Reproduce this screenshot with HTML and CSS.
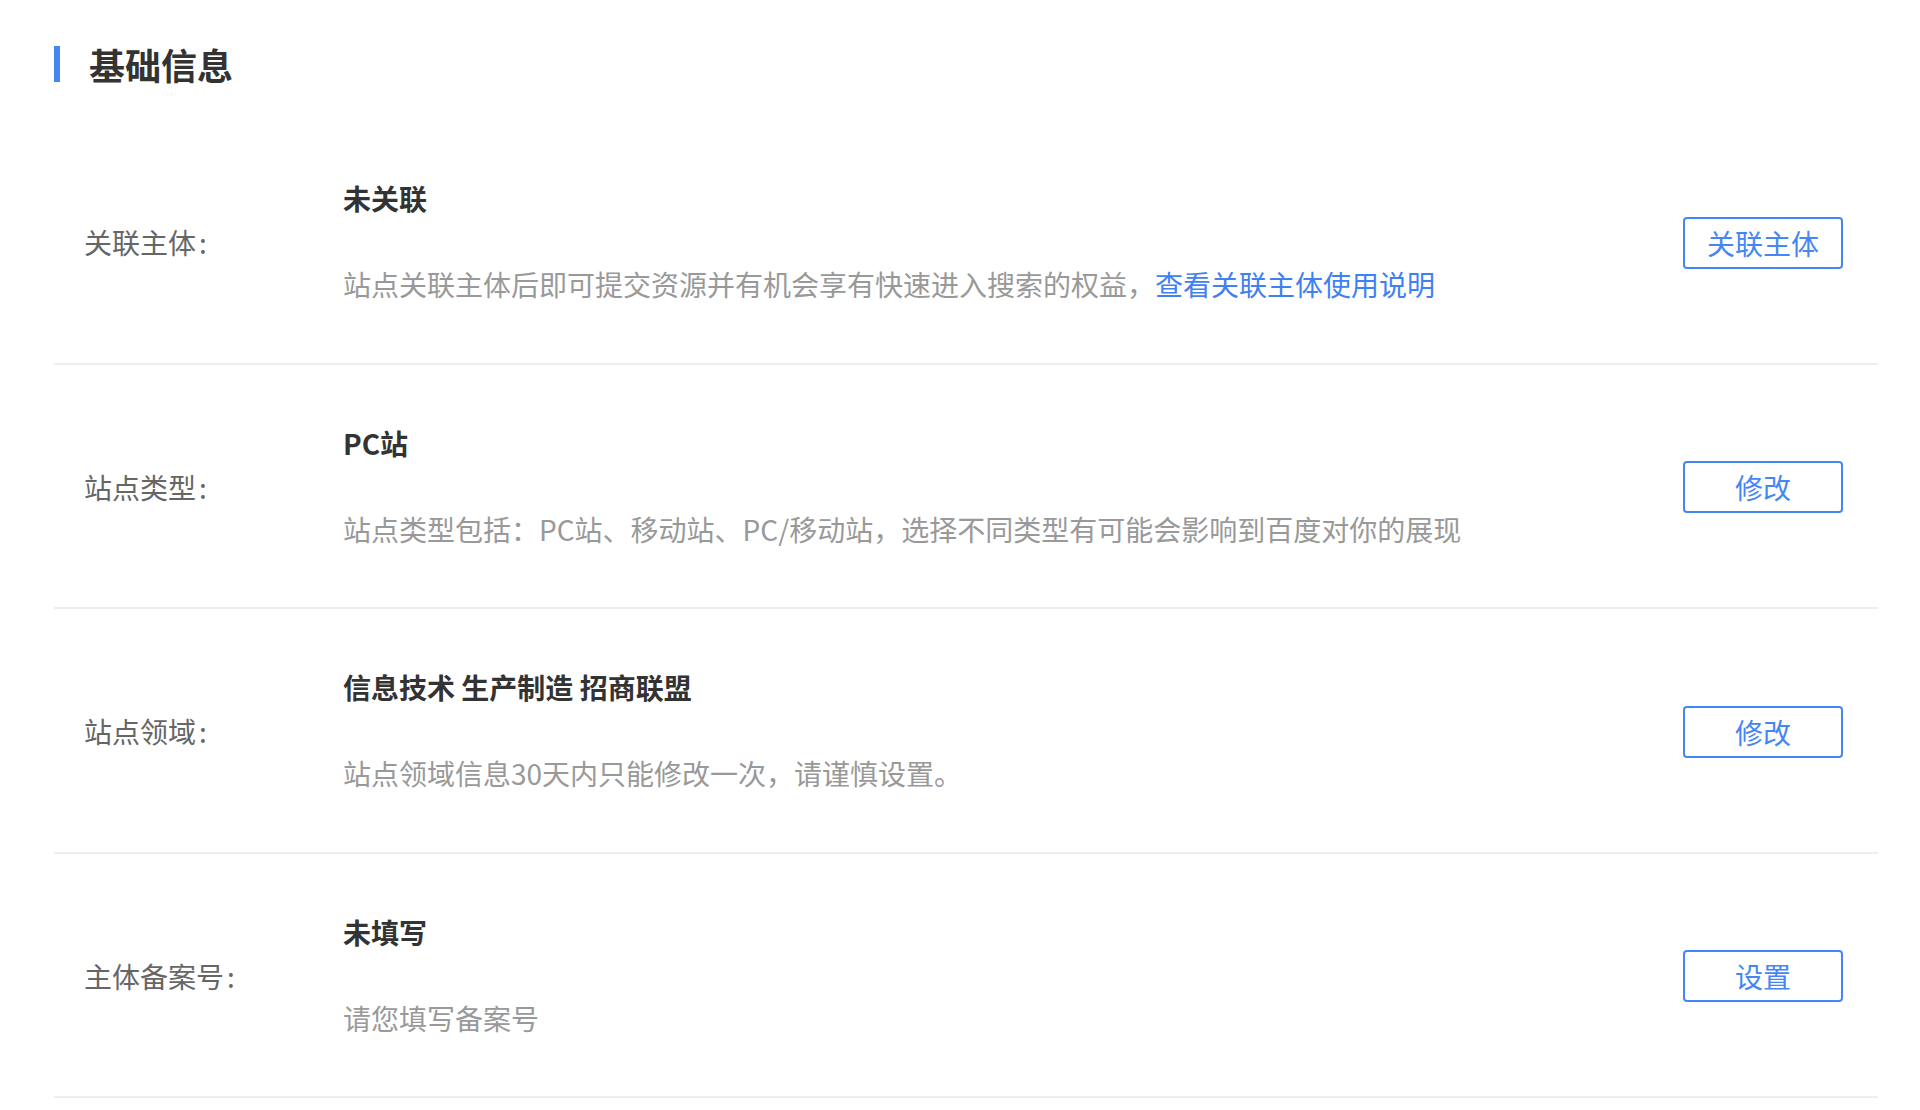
FILE: index.html
```html
<!DOCTYPE html>
<html lang="zh-CN">
<head>
<meta charset="utf-8">
<title>基础信息</title>
<link rel="stylesheet" href="styles.css">
</head>
<body>
<div class="page">
  <h2 class="section-title"><span class="title-bar"></span><span class="title-text">基础信息</span></h2>
  <div class="info-list">
    <div class="info-row">
      <div class="info-label">关联主体<span class="colon">:</span></div>
      <div class="info-body">
        <div class="info-value">未关联</div>
        <div class="info-desc">站点关联主体后即可提交资源并有机会享有快速进入搜索的权益，<a class="info-link" href="#">查看关联主体使用说明</a></div>
      </div>
      <button class="info-btn">关联主体</button>
    </div>
    <div class="info-row">
      <div class="info-label">站点类型<span class="colon">:</span></div>
      <div class="info-body">
        <div class="info-value">PC站</div>
        <div class="info-desc">站点类型包括：PC站、移动站、PC/移动站，选择不同类型有可能会影响到百度对你的展现</div>
      </div>
      <button class="info-btn">修改</button>
    </div>
    <div class="info-row">
      <div class="info-label">站点领域<span class="colon">:</span></div>
      <div class="info-body">
        <div class="info-value">信息技术 生产制造 招商联盟</div>
        <div class="info-desc">站点领域信息30天内只能修改一次，请谨慎设置。</div>
      </div>
      <button class="info-btn">修改</button>
    </div>
    <div class="info-row">
      <div class="info-label">主体备案号<span class="colon">:</span></div>
      <div class="info-body">
        <div class="info-value">未填写</div>
        <div class="info-desc">请您填写备案号</div>
      </div>
      <button class="info-btn">设置</button>
    </div>
  </div>
</div>
</body>
</html>
```

FILE: styles.css
```css
html, body {
  margin: 0;
  padding: 0;
  background: #ffffff;
}

body {
  font-family: "Noto Sans CJK SC", "Noto Sans", sans-serif;
  color: #333333;
}

.page {
  padding: 0 42px 0 54px;
}

.section-title {
  display: flex;
  align-items: center;
  margin: 46px 0 38px;
  height: 36px;
}

.title-bar {
  width: 6px;
  height: 36px;
  background: #4586f6;
  margin-right: 29px;
}

.title-text {
  font-size: 36px;
  line-height: 36px;
  font-weight: 700;
  color: #333333;
}

.info-row {
  display: flex;
  align-items: center;
  height: 242.5px;
  border-bottom: 2px solid #eeeeee;
}

.info-label {
  width: 259px;
  padding-left: 30px;
  flex-shrink: 0;
  margin-top: 2px;
  font-size: 28px;
  line-height: 40px;
  color: #666666;
}

.colon {
  margin-left: 3px;
}

.info-body {
  flex: 1;
}

.info-value {
  font-size: 28px;
  line-height: 40px;
  font-weight: 700;
  color: #333333;
}

.info-desc {
  margin-top: 46px;
  font-size: 28px;
  line-height: 40px;
  color: #999999;
}

.info-link {
  color: #3f80f5;
  text-decoration: none;
}

.info-btn {
  flex-shrink: 0;
  width: 160px;
  height: 52px;
  margin-top: 3px;
  margin-right: 35px;
  padding: 0;
  border: 2px solid #4586f6;
  border-radius: 4px;
  background: #ffffff;
  color: #4586f6;
  font-family: "Noto Sans CJK SC", "Noto Sans", sans-serif;
  font-size: 28px;
  line-height: 48px;
  cursor: pointer;
}
```
